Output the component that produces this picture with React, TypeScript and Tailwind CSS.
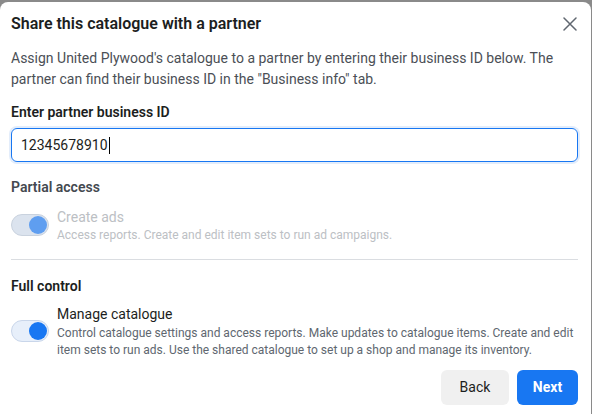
import React from "react";

function Toggle({ disabled }: { disabled?: boolean }) {
  return (
    <div
      className={
        "relative h-[22px] w-[38px] shrink-0 rounded-full border " +
        (disabled ? "border-[#c9d2de] bg-[#dbe3ee]" : "border-[#c9d6ea] bg-[#e7effa]")
      }
    >
      <div
        className={
          "absolute right-[1px] top-[1px] h-[18px] w-[18px] rounded-full " +
          (disabled ? "bg-[#5f9ef0]" : "bg-[#1877f2]")
        }
      />
    </div>
  );
}

export default function App() {
  return (
    <div className="h-[414px] w-[592px] bg-[#8a8a8a] pt-[2px] font-['Roboto',sans-serif]">
      <div className="h-[412px] w-[591px] rounded-t-[8px] bg-white px-[11px] pt-[12px]">
        <div className="flex items-center justify-between">
          <h1 className="text-[16px] font-semibold leading-[20px] text-[#1c1e21]">
            Share this catalogue with a partner
          </h1>
          <svg width="14" height="14" viewBox="0 0 14 14" className="mr-[3px]">
            <path d="M1 1L13 13M13 1L1 13" stroke="#606770" strokeWidth="1.5" strokeLinecap="round" />
          </svg>
        </div>
        <p className="mt-[14px] text-[14px] leading-[21px] text-[#4b4f56]">
          Assign United Plywood's catalogue to a partner by entering their business ID below. The
          partner can find their business ID in the "Business info" tab.
        </p>

        <div className="mt-[13px] text-[14px] font-semibold leading-[18px] text-[#1c1e21]">
          Enter partner business ID
        </div>
        <div className="mt-[7px] flex h-[34px] w-[567px] items-center rounded-[6px] border-[1.5px] border-[#1877f2] px-[9px] shadow-[0_0_0_2px_#e3edfb]">
          <span className="text-[14px] text-[#1c1e21]">12345678910</span>
          <span className="ml-[1px] h-[17px] w-[1px] bg-black" />
        </div>

        <div className="mt-[16px] text-[14px] font-semibold leading-[18px] text-[#444950]">
          Partial access
        </div>
        <div className="mt-[9px] flex items-center gap-[8px]">
          <Toggle disabled />
          <div className="pt-[2px]">
            <div className="text-[14px] leading-[20px] text-[#bcc0c4]">Create ads</div>
            <div className="text-[12px] leading-[17px] text-[#bcc0c4]">
              Access reports. Create and edit item sets to run ad campaigns.
            </div>
          </div>
        </div>

        <div className="mt-[15px] h-[1px] w-[567px] bg-[#dadde1]" />

        <div className="mt-[17px] text-[14px] font-semibold leading-[18px] text-[#1c1e21]">
          Full control
        </div>
        <div className="mt-[8px] flex items-center gap-[8px]">
          <Toggle />
          <div>
            <div className="text-[14px] leading-[22px] text-[#1c1e21]">Manage catalogue</div>
            <div className="text-[12px] leading-[17px] text-[#606770]">
              Control catalogue settings and access reports. Make updates to catalogue items. Create and edit
              item sets to run ads. Use the shared catalogue to set up a shop and manage its inventory.
            </div>
          </div>
        </div>

        <div className="mt-[11px] flex w-[567px] justify-end gap-[8px]">
          <button className="h-[35px] w-[68px] rounded-[6px] bg-[#f0f0f0] text-[14px] text-[#1c1e21]">
            Back
          </button>
          <button className="h-[35px] w-[61px] rounded-[6px] bg-[#1877f2] text-[14px] font-bold text-white">
            Next
          </button>
        </div>
      </div>
    </div>
  );
}
